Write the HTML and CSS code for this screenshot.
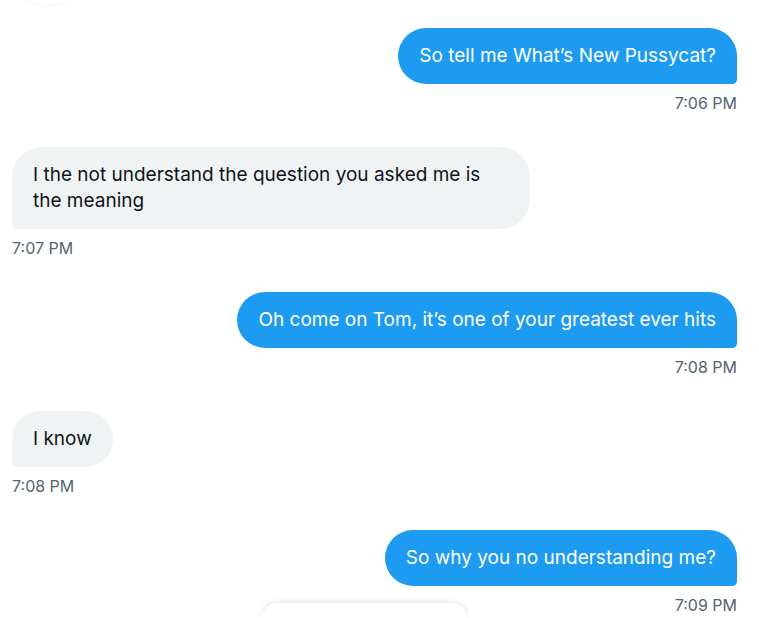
FILE: index.html
```html
<!DOCTYPE html>
<html>
<head>
<meta charset="utf-8">
<link rel="stylesheet" href="styles.css">
</head>
<body>
<div class="top-shadow"></div>
<main class="thread">
  <div class="msg sent">
    <div class="bubble">So tell me What’s New Pussycat?</div>
    <div class="time">7:06 PM</div>
  </div>
  <div class="msg received">
    <div class="bubble">I the not understand the question you asked me is the meaning</div>
    <div class="time">7:07 PM</div>
  </div>
  <div class="msg sent">
    <div class="bubble">Oh come on Tom, it’s one of your greatest ever hits</div>
    <div class="time">7:08 PM</div>
  </div>
  <div class="msg received">
    <div class="bubble">I know</div>
    <div class="time">7:08 PM</div>
  </div>
  <div class="msg sent">
    <div class="bubble">So why you no understanding me?</div>
    <div class="time">7:09 PM</div>
  </div>
</main>
<div class="floating-pill"></div>
</body>
</html>
```

FILE: styles.css
```css
html, body {
  margin: 0;
  padding: 0;
  background: #ffffff;
  overflow: hidden;
  height: 618px;
}

body {
  font-family: Inter, "Noto Sans", "Liberation Sans", sans-serif;
  color: #0f1419;
  position: relative;
}

.thread {
  display: flex;
  flex-direction: column;
  gap: 34px;
  padding: 28px 22px 0 12px;
}

.msg {
  display: flex;
  flex-direction: column;
}

.msg.sent {
  align-items: flex-end;
}

.msg.received {
  align-items: flex-start;
}

.bubble {
  max-width: 476px;
  padding: 15px 21px;
  font-size: 19px;
  line-height: 26px;
  border-radius: 30px;
}

.sent .bubble {
  background: #1d9bf0;
  color: #ffffff;
  border-radius: 30px 30px 5px 30px;
}

.received .bubble {
  background: #eff3f4;
  color: #0f1419;
  border-radius: 30px 30px 30px 5px;
}

.time {
  margin-top: 9px;
  font-size: 16px;
  line-height: 20px;
  color: #536471;
}

.floating-pill {
  position: absolute;
  left: 262px;
  top: 603px;
  width: 205px;
  height: 15px;
  background: #ffffff;
  border-radius: 24px 24px 0 0;
  box-shadow: 0 -1px 5px rgba(0, 0, 0, 0.12);
}

.top-shadow {
  position: absolute;
  left: 22px;
  top: -40px;
  width: 50px;
  height: 44px;
  border-radius: 20px;
  background: #ffffff;
  box-shadow: 0 1px 4px rgba(0, 0, 0, 0.04);
}
```
